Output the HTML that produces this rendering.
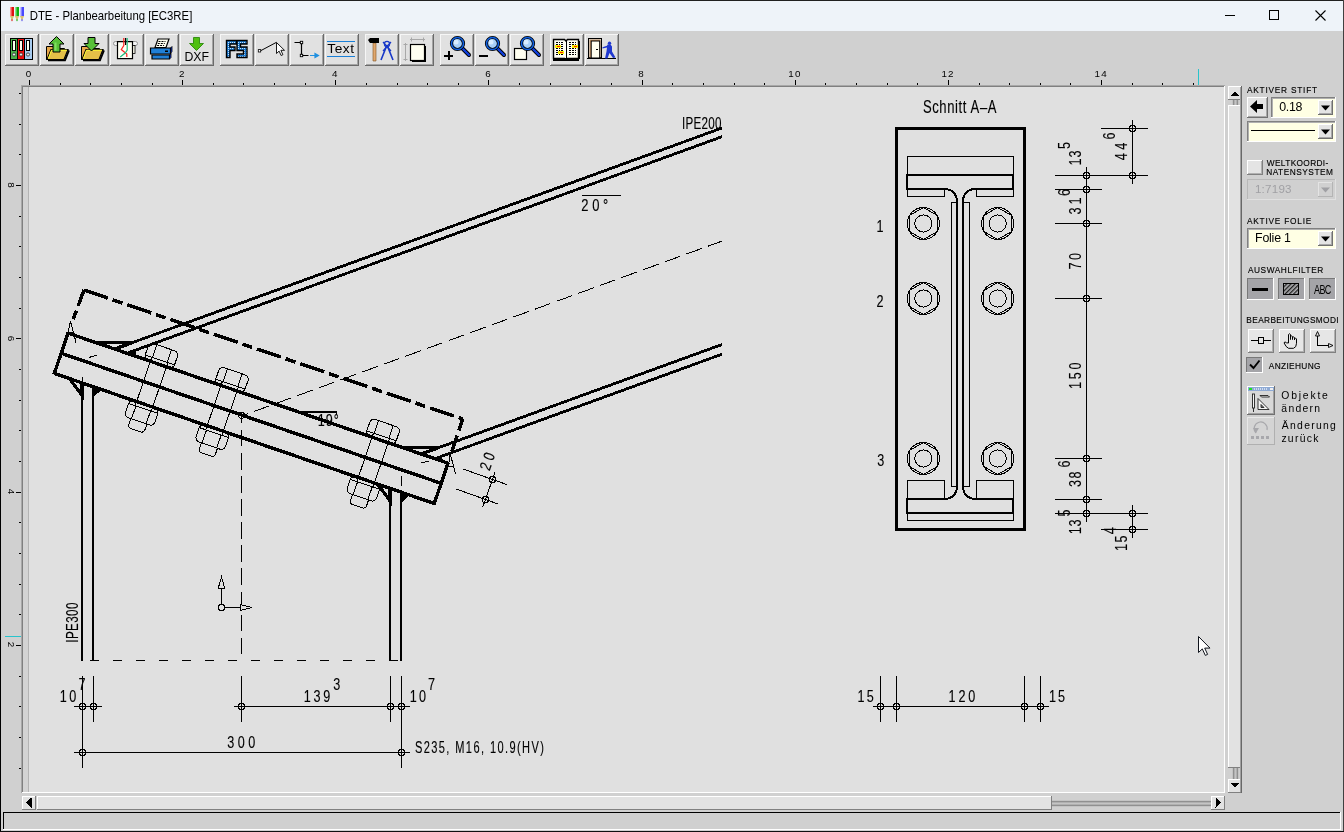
<!DOCTYPE html>
<html lang="de"><head><meta charset="utf-8"><title>DTE - Planbearbeitung [EC3RE]</title>
<style>
html,body{margin:0;padding:0;background:#d0d0d0;overflow:hidden;width:1344px;height:832px}
svg{display:block;position:absolute;left:0;top:0;will-change:transform}
text{font-family:"Liberation Sans",sans-serif;white-space:pre}
.ce{shape-rendering:crispEdges}
</style></head><body>
<svg width="1344" height="832" viewBox="0 0 1344 832">
<g class="ce">
<rect x="0" y="0" width="1344" height="832" fill="#d0d0d0"/>
<rect x="0" y="0" width="1344" height="31" fill="#eef3f9"/>
<rect x="0" y="0" width="1344" height="1" fill="#202020"/>
<rect x="0" y="0" width="1" height="832" fill="#000000"/>
<rect x="1343" y="0" width="1" height="832" fill="#404040"/>
<rect x="0" y="831" width="1344" height="1" fill="#101010"/>
</g>
<g>
<rect x="10" y="7" width="2" height="9" fill="#ff9090"/>
<rect x="11.5" y="7" width="2.5" height="9" fill="#e01010"/>
<path d="M10 16h4l-2 5z" fill="#d8c070"/>
<path d="M11 19.5h2l-1 2z" fill="#e01010"/>
<rect x="15" y="7" width="2" height="9" fill="#90e090"/>
<rect x="16.5" y="7" width="2.5" height="9" fill="#10b010"/>
<path d="M15 16h4l-2 5z" fill="#d8c070"/>
<path d="M16 19.5h2l-1 2z" fill="#10b010"/>
<rect x="20" y="7" width="2" height="9" fill="#c0c0ff"/>
<rect x="21.5" y="7" width="2.5" height="9" fill="#4848ff"/>
<path d="M20 16h4l-2 5z" fill="#d8c070"/>
<path d="M21 19.5h2l-1 2z" fill="#4848ff"/>
</g>
<text transform="translate(30.60 20.00) scale(0.940 1)" x="-0.97" y="0" font-family="'Liberation Sans', sans-serif" font-size="12.10" letter-spacing="-0.015" fill="#000">DTE - Planbearbeitung [EC3RE]</text>
<g stroke="#000" stroke-width="1" fill="none" class="ce">
<path d="M1224.5 15.5h10"/>
<rect x="1269.5" y="10.5" width="9" height="9" rx="1"/>
</g>
<path d="M1315.5 10.5l10 10M1325.5 10.5l-10 10" stroke="#000" stroke-width="1.1" fill="none"/>
<g class="ce" fill="#000">
<rect x="29" y="80" width="1" height="5" fill="#000"/>
<rect x="60" y="83" width="1" height="2" fill="#000"/>
<rect x="90" y="83" width="1" height="2" fill="#000"/>
<rect x="121" y="83" width="1" height="2" fill="#000"/>
<rect x="152" y="83" width="1" height="2" fill="#000"/>
<rect x="182" y="80" width="1" height="5" fill="#000"/>
<rect x="213" y="83" width="1" height="2" fill="#000"/>
<rect x="243" y="83" width="1" height="2" fill="#000"/>
<rect x="274" y="83" width="1" height="2" fill="#000"/>
<rect x="305" y="83" width="1" height="2" fill="#000"/>
<rect x="335" y="80" width="1" height="5" fill="#000"/>
<rect x="366" y="83" width="1" height="2" fill="#000"/>
<rect x="397" y="83" width="1" height="2" fill="#000"/>
<rect x="427" y="83" width="1" height="2" fill="#000"/>
<rect x="458" y="83" width="1" height="2" fill="#000"/>
<rect x="488" y="80" width="1" height="5" fill="#000"/>
<rect x="519" y="83" width="1" height="2" fill="#000"/>
<rect x="550" y="83" width="1" height="2" fill="#000"/>
<rect x="580" y="83" width="1" height="2" fill="#000"/>
<rect x="611" y="83" width="1" height="2" fill="#000"/>
<rect x="642" y="80" width="1" height="5" fill="#000"/>
<rect x="672" y="83" width="1" height="2" fill="#000"/>
<rect x="703" y="83" width="1" height="2" fill="#000"/>
<rect x="734" y="83" width="1" height="2" fill="#000"/>
<rect x="764" y="83" width="1" height="2" fill="#000"/>
<rect x="795" y="80" width="1" height="5" fill="#000"/>
<rect x="825" y="83" width="1" height="2" fill="#000"/>
<rect x="856" y="83" width="1" height="2" fill="#000"/>
<rect x="887" y="83" width="1" height="2" fill="#000"/>
<rect x="917" y="83" width="1" height="2" fill="#000"/>
<rect x="948" y="80" width="1" height="5" fill="#000"/>
<rect x="979" y="83" width="1" height="2" fill="#000"/>
<rect x="1009" y="83" width="1" height="2" fill="#000"/>
<rect x="1040" y="83" width="1" height="2" fill="#000"/>
<rect x="1070" y="83" width="1" height="2" fill="#000"/>
<rect x="1101" y="80" width="1" height="5" fill="#000"/>
<rect x="1132" y="83" width="1" height="2" fill="#000"/>
<rect x="1162" y="83" width="1" height="2" fill="#000"/>
<rect x="1193" y="83" width="1" height="2" fill="#000"/>
<rect x="19" y="93" width="2" height="1" fill="#000"/>
<rect x="19" y="124" width="2" height="1" fill="#000"/>
<rect x="19" y="154" width="2" height="1" fill="#000"/>
<rect x="16" y="185" width="5" height="1" fill="#000"/>
<rect x="19" y="216" width="2" height="1" fill="#000"/>
<rect x="19" y="246" width="2" height="1" fill="#000"/>
<rect x="19" y="277" width="2" height="1" fill="#000"/>
<rect x="19" y="308" width="2" height="1" fill="#000"/>
<rect x="16" y="338" width="5" height="1" fill="#000"/>
<rect x="19" y="369" width="2" height="1" fill="#000"/>
<rect x="19" y="400" width="2" height="1" fill="#000"/>
<rect x="19" y="430" width="2" height="1" fill="#000"/>
<rect x="19" y="461" width="2" height="1" fill="#000"/>
<rect x="16" y="492" width="5" height="1" fill="#000"/>
<rect x="19" y="522" width="2" height="1" fill="#000"/>
<rect x="19" y="553" width="2" height="1" fill="#000"/>
<rect x="19" y="584" width="2" height="1" fill="#000"/>
<rect x="19" y="614" width="2" height="1" fill="#000"/>
<rect x="16" y="645" width="5" height="1" fill="#000"/>
<rect x="19" y="676" width="2" height="1" fill="#000"/>
<rect x="19" y="706" width="2" height="1" fill="#000"/>
<rect x="19" y="737" width="2" height="1" fill="#000"/>
<rect x="19" y="768" width="2" height="1" fill="#000"/>
</g>
<g class="ce">
<rect x="1198" y="69" width="1" height="16" fill="#28c4cc"/>
<rect x="5" y="636" width="16" height="1" fill="#28c4cc"/>
</g>
<text x="28.5" y="76.8" font-family="'Liberation Mono', monospace" font-size="9.8" text-anchor="middle" letter-spacing="0" fill="#000">0</text>
<text x="181.7" y="76.8" font-family="'Liberation Mono', monospace" font-size="9.8" text-anchor="middle" letter-spacing="0" fill="#000">2</text>
<text x="334.8" y="76.8" font-family="'Liberation Mono', monospace" font-size="9.8" text-anchor="middle" letter-spacing="0" fill="#000">4</text>
<text x="488.0" y="76.8" font-family="'Liberation Mono', monospace" font-size="9.8" text-anchor="middle" letter-spacing="0" fill="#000">6</text>
<text x="641.1" y="76.8" font-family="'Liberation Mono', monospace" font-size="9.8" text-anchor="middle" letter-spacing="0" fill="#000">8</text>
<text x="794.9" y="76.8" font-family="'Liberation Mono', monospace" font-size="9.8" text-anchor="middle" letter-spacing="1.2" fill="#000">10</text>
<text x="948.1" y="76.8" font-family="'Liberation Mono', monospace" font-size="9.8" text-anchor="middle" letter-spacing="1.2" fill="#000">12</text>
<text x="1101.2" y="76.8" font-family="'Liberation Mono', monospace" font-size="9.8" text-anchor="middle" letter-spacing="1.2" fill="#000">14</text>
<text transform="translate(8.4 185.0) rotate(90)" font-family="'Liberation Mono', monospace" font-size="9.8" text-anchor="middle" fill="#000">8</text>
<text transform="translate(8.4 338.5) rotate(90)" font-family="'Liberation Mono', monospace" font-size="9.8" text-anchor="middle" fill="#000">6</text>
<text transform="translate(8.4 491.5) rotate(90)" font-family="'Liberation Mono', monospace" font-size="9.8" text-anchor="middle" fill="#000">4</text>
<text transform="translate(8.4 644.5) rotate(90)" font-family="'Liberation Mono', monospace" font-size="9.8" text-anchor="middle" fill="#000">2</text>
<g class="ce">
<rect x="21" y="85" width="1204" height="708" fill="#e0e0e0"/>
<rect x="21" y="85" width="1204" height="1" fill="#a8a8a8"/>
<rect x="21" y="85" width="1" height="708" fill="#a8a8a8"/>
<rect x="22" y="86" width="1203" height="1" fill="#808080"/>
<rect x="22" y="86" width="1" height="707" fill="#808080"/>
<rect x="22" y="792" width="1203" height="1" fill="#ffffff"/>
<rect x="1224" y="86" width="1" height="707" fill="#ffffff"/>
<rect x="23" y="87" width="5" height="705" fill="#d3d3d3"/>
<rect x="28" y="87" width="1" height="705" fill="#b4b4b4"/>
</g>
<g class="ce">
<rect x="1228" y="86" width="14" height="14" fill="#e2e2e2"/>
<rect x="1228" y="86" width="14" height="1" fill="#ffffff"/>
<rect x="1228" y="86" width="1" height="14" fill="#ffffff"/>
<rect x="1228" y="99" width="14" height="1" fill="#808080"/>
<rect x="1241" y="86" width="1" height="14" fill="#808080"/>
<path d="M1231 96h8l-4-5z" fill="#000"/>
<rect x="1232" y="100" width="7" height="5" fill="#c4c4c4"/>
<rect x="1233" y="100" width="1" height="5" fill="#909090"/>
<rect x="1234" y="100" width="1" height="5" fill="#b0b0b0"/>
<rect x="1236" y="100" width="1" height="5" fill="#b0b0b0"/>
<rect x="1237" y="100" width="1" height="5" fill="#909090"/>
<rect x="1228" y="105" width="14" height="663" fill="#e2e2e2"/>
<rect x="1228" y="105" width="14" height="1" fill="#ffffff"/>
<rect x="1228" y="105" width="1" height="663" fill="#ffffff"/>
<rect x="1228" y="767" width="14" height="1" fill="#808080"/>
<rect x="1241" y="105" width="1" height="663" fill="#808080"/>
<rect x="1232" y="768" width="7" height="11" fill="#c4c4c4"/>
<rect x="1233" y="768" width="1" height="11" fill="#909090"/>
<rect x="1234" y="768" width="1" height="11" fill="#b0b0b0"/>
<rect x="1236" y="768" width="1" height="11" fill="#b0b0b0"/>
<rect x="1237" y="768" width="1" height="11" fill="#909090"/>
<rect x="1228" y="779" width="14" height="14" fill="#e2e2e2"/>
<rect x="1228" y="779" width="14" height="1" fill="#ffffff"/>
<rect x="1228" y="779" width="1" height="14" fill="#ffffff"/>
<rect x="1228" y="792" width="14" height="1" fill="#808080"/>
<rect x="1241" y="779" width="1" height="14" fill="#808080"/>
<path d="M1231 783h8l-4 5z" fill="#000"/>
<rect x="22" y="796" width="14" height="14" fill="#e2e2e2"/>
<rect x="22" y="796" width="14" height="1" fill="#ffffff"/>
<rect x="22" y="796" width="1" height="14" fill="#ffffff"/>
<rect x="22" y="809" width="14" height="1" fill="#808080"/>
<rect x="35" y="796" width="1" height="14" fill="#808080"/>
<path d="M31.500 797.500v10l-5.500-5z" fill="#000"/>
<rect x="37" y="796" width="1015" height="14" fill="#e2e2e2"/>
<rect x="37" y="796" width="1015" height="1" fill="#ffffff"/>
<rect x="37" y="796" width="1" height="14" fill="#ffffff"/>
<rect x="37" y="809" width="1015" height="1" fill="#808080"/>
<rect x="1051" y="796" width="1" height="14" fill="#808080"/>
<rect x="1052" y="800" width="159" height="7" fill="#c4c4c4"/>
<rect x="1052" y="801" width="159" height="1" fill="#909090"/>
<rect x="1052" y="802" width="159" height="1" fill="#b0b0b0"/>
<rect x="1052" y="804" width="159" height="1" fill="#b0b0b0"/>
<rect x="1052" y="805" width="159" height="1" fill="#909090"/>
<rect x="1211" y="796" width="14" height="14" fill="#e2e2e2"/>
<rect x="1211" y="796" width="14" height="1" fill="#ffffff"/>
<rect x="1211" y="796" width="1" height="14" fill="#ffffff"/>
<rect x="1211" y="809" width="14" height="1" fill="#808080"/>
<rect x="1224" y="796" width="1" height="14" fill="#808080"/>
<path d="M1215.500 797.500v10l5.500-5z" fill="#000"/>
<rect x="3" y="812" width="1338" height="1" fill="#000"/>
<rect x="3" y="812" width="1" height="18" fill="#000"/>
<rect x="3" y="829" width="1338" height="1" fill="#fff"/>
<rect x="1340" y="812" width="1" height="18" fill="#fff"/>
</g>
<g class="ce">
<rect x="5" y="34" width="34" height="32" fill="#e1e1e1"/>
<rect x="5" y="34" width="34" height="1" fill="#f6f6f6"/>
<rect x="5" y="34" width="1" height="32" fill="#f6f6f6"/>
<rect x="6" y="64" width="32" height="1" fill="#a4a4a4"/>
<rect x="37" y="35" width="1" height="30" fill="#a4a4a4"/>
<rect x="5" y="65" width="34" height="1" fill="#6a6a6a"/>
<rect x="38" y="34" width="1" height="32" fill="#6a6a6a"/>
<rect x="40" y="34" width="34" height="32" fill="#e1e1e1"/>
<rect x="40" y="34" width="34" height="1" fill="#f6f6f6"/>
<rect x="40" y="34" width="1" height="32" fill="#f6f6f6"/>
<rect x="41" y="64" width="32" height="1" fill="#a4a4a4"/>
<rect x="72" y="35" width="1" height="30" fill="#a4a4a4"/>
<rect x="40" y="65" width="34" height="1" fill="#6a6a6a"/>
<rect x="73" y="34" width="1" height="32" fill="#6a6a6a"/>
<rect x="75" y="34" width="34" height="32" fill="#e1e1e1"/>
<rect x="75" y="34" width="34" height="1" fill="#f6f6f6"/>
<rect x="75" y="34" width="1" height="32" fill="#f6f6f6"/>
<rect x="76" y="64" width="32" height="1" fill="#a4a4a4"/>
<rect x="107" y="35" width="1" height="30" fill="#a4a4a4"/>
<rect x="75" y="65" width="34" height="1" fill="#6a6a6a"/>
<rect x="108" y="34" width="1" height="32" fill="#6a6a6a"/>
<rect x="110" y="34" width="34" height="32" fill="#e1e1e1"/>
<rect x="110" y="34" width="34" height="1" fill="#f6f6f6"/>
<rect x="110" y="34" width="1" height="32" fill="#f6f6f6"/>
<rect x="111" y="64" width="32" height="1" fill="#a4a4a4"/>
<rect x="142" y="35" width="1" height="30" fill="#a4a4a4"/>
<rect x="110" y="65" width="34" height="1" fill="#6a6a6a"/>
<rect x="143" y="34" width="1" height="32" fill="#6a6a6a"/>
<rect x="145" y="34" width="34" height="32" fill="#e1e1e1"/>
<rect x="145" y="34" width="34" height="1" fill="#f6f6f6"/>
<rect x="145" y="34" width="1" height="32" fill="#f6f6f6"/>
<rect x="146" y="64" width="32" height="1" fill="#a4a4a4"/>
<rect x="177" y="35" width="1" height="30" fill="#a4a4a4"/>
<rect x="145" y="65" width="34" height="1" fill="#6a6a6a"/>
<rect x="178" y="34" width="1" height="32" fill="#6a6a6a"/>
<rect x="180" y="34" width="34" height="32" fill="#e1e1e1"/>
<rect x="180" y="34" width="34" height="1" fill="#f6f6f6"/>
<rect x="180" y="34" width="1" height="32" fill="#f6f6f6"/>
<rect x="181" y="64" width="32" height="1" fill="#a4a4a4"/>
<rect x="212" y="35" width="1" height="30" fill="#a4a4a4"/>
<rect x="180" y="65" width="34" height="1" fill="#6a6a6a"/>
<rect x="213" y="34" width="1" height="32" fill="#6a6a6a"/>
<rect x="220" y="34" width="34" height="32" fill="#e1e1e1"/>
<rect x="220" y="34" width="34" height="1" fill="#f6f6f6"/>
<rect x="220" y="34" width="1" height="32" fill="#f6f6f6"/>
<rect x="221" y="64" width="32" height="1" fill="#a4a4a4"/>
<rect x="252" y="35" width="1" height="30" fill="#a4a4a4"/>
<rect x="220" y="65" width="34" height="1" fill="#6a6a6a"/>
<rect x="253" y="34" width="1" height="32" fill="#6a6a6a"/>
<rect x="255" y="34" width="34" height="32" fill="#e1e1e1"/>
<rect x="255" y="34" width="34" height="1" fill="#f6f6f6"/>
<rect x="255" y="34" width="1" height="32" fill="#f6f6f6"/>
<rect x="256" y="64" width="32" height="1" fill="#a4a4a4"/>
<rect x="287" y="35" width="1" height="30" fill="#a4a4a4"/>
<rect x="255" y="65" width="34" height="1" fill="#6a6a6a"/>
<rect x="288" y="34" width="1" height="32" fill="#6a6a6a"/>
<rect x="290" y="34" width="34" height="32" fill="#e1e1e1"/>
<rect x="290" y="34" width="34" height="1" fill="#f6f6f6"/>
<rect x="290" y="34" width="1" height="32" fill="#f6f6f6"/>
<rect x="291" y="64" width="32" height="1" fill="#a4a4a4"/>
<rect x="322" y="35" width="1" height="30" fill="#a4a4a4"/>
<rect x="290" y="65" width="34" height="1" fill="#6a6a6a"/>
<rect x="323" y="34" width="1" height="32" fill="#6a6a6a"/>
<rect x="325" y="34" width="34" height="32" fill="#e1e1e1"/>
<rect x="325" y="34" width="34" height="1" fill="#f6f6f6"/>
<rect x="325" y="34" width="1" height="32" fill="#f6f6f6"/>
<rect x="326" y="64" width="32" height="1" fill="#a4a4a4"/>
<rect x="357" y="35" width="1" height="30" fill="#a4a4a4"/>
<rect x="325" y="65" width="34" height="1" fill="#6a6a6a"/>
<rect x="358" y="34" width="1" height="32" fill="#6a6a6a"/>
<rect x="365" y="34" width="34" height="32" fill="#e1e1e1"/>
<rect x="365" y="34" width="34" height="1" fill="#f6f6f6"/>
<rect x="365" y="34" width="1" height="32" fill="#f6f6f6"/>
<rect x="366" y="64" width="32" height="1" fill="#a4a4a4"/>
<rect x="397" y="35" width="1" height="30" fill="#a4a4a4"/>
<rect x="365" y="65" width="34" height="1" fill="#6a6a6a"/>
<rect x="398" y="34" width="1" height="32" fill="#6a6a6a"/>
<rect x="400" y="34" width="34" height="32" fill="#e1e1e1"/>
<rect x="400" y="34" width="34" height="1" fill="#f6f6f6"/>
<rect x="400" y="34" width="1" height="32" fill="#f6f6f6"/>
<rect x="401" y="64" width="32" height="1" fill="#a4a4a4"/>
<rect x="432" y="35" width="1" height="30" fill="#a4a4a4"/>
<rect x="400" y="65" width="34" height="1" fill="#6a6a6a"/>
<rect x="433" y="34" width="1" height="32" fill="#6a6a6a"/>
<rect x="440" y="34" width="34" height="32" fill="#e1e1e1"/>
<rect x="440" y="34" width="34" height="1" fill="#f6f6f6"/>
<rect x="440" y="34" width="1" height="32" fill="#f6f6f6"/>
<rect x="441" y="64" width="32" height="1" fill="#a4a4a4"/>
<rect x="472" y="35" width="1" height="30" fill="#a4a4a4"/>
<rect x="440" y="65" width="34" height="1" fill="#6a6a6a"/>
<rect x="473" y="34" width="1" height="32" fill="#6a6a6a"/>
<rect x="475" y="34" width="34" height="32" fill="#e1e1e1"/>
<rect x="475" y="34" width="34" height="1" fill="#f6f6f6"/>
<rect x="475" y="34" width="1" height="32" fill="#f6f6f6"/>
<rect x="476" y="64" width="32" height="1" fill="#a4a4a4"/>
<rect x="507" y="35" width="1" height="30" fill="#a4a4a4"/>
<rect x="475" y="65" width="34" height="1" fill="#6a6a6a"/>
<rect x="508" y="34" width="1" height="32" fill="#6a6a6a"/>
<rect x="510" y="34" width="34" height="32" fill="#e1e1e1"/>
<rect x="510" y="34" width="34" height="1" fill="#f6f6f6"/>
<rect x="510" y="34" width="1" height="32" fill="#f6f6f6"/>
<rect x="511" y="64" width="32" height="1" fill="#a4a4a4"/>
<rect x="542" y="35" width="1" height="30" fill="#a4a4a4"/>
<rect x="510" y="65" width="34" height="1" fill="#6a6a6a"/>
<rect x="543" y="34" width="1" height="32" fill="#6a6a6a"/>
<rect x="550" y="34" width="34" height="32" fill="#e1e1e1"/>
<rect x="550" y="34" width="34" height="1" fill="#f6f6f6"/>
<rect x="550" y="34" width="1" height="32" fill="#f6f6f6"/>
<rect x="551" y="64" width="32" height="1" fill="#a4a4a4"/>
<rect x="582" y="35" width="1" height="30" fill="#a4a4a4"/>
<rect x="550" y="65" width="34" height="1" fill="#6a6a6a"/>
<rect x="583" y="34" width="1" height="32" fill="#6a6a6a"/>
<rect x="585" y="34" width="34" height="32" fill="#e1e1e1"/>
<rect x="585" y="34" width="34" height="1" fill="#f6f6f6"/>
<rect x="585" y="34" width="1" height="32" fill="#f6f6f6"/>
<rect x="586" y="64" width="32" height="1" fill="#a4a4a4"/>
<rect x="617" y="35" width="1" height="30" fill="#a4a4a4"/>
<rect x="585" y="65" width="34" height="1" fill="#6a6a6a"/>
<rect x="618" y="34" width="1" height="32" fill="#6a6a6a"/>
</g>
<g class="ce">
<rect x="10" y="38" width="23" height="22" fill="#000"/>
<rect x="11" y="39" width="6" height="20" fill="#48b048"/>
<rect x="12" y="40" width="4" height="11" fill="#000"/>
<rect x="13" y="41" width="2" height="9" fill="#fffff0"/>
<rect x="18" y="39" width="6" height="20" fill="#f01010"/>
<rect x="19" y="40" width="4" height="11" fill="#000"/>
<rect x="20" y="41" width="2" height="9" fill="#fffff0"/>
<rect x="25" y="39" width="7" height="20" fill="#a8ccf0"/>
<rect x="26" y="40" width="4" height="11" fill="#000"/>
<rect x="27" y="41" width="2" height="9" fill="#fffff0"/>
</g>
<circle cx="14" cy="54.5" r="1.6" fill="#e8e8e8" stroke="#303030" stroke-width="0.8"/>
<circle cx="21" cy="54.5" r="1.6" fill="#e8e8e8" stroke="#303030" stroke-width="0.8"/>
<circle cx="28" cy="54.5" r="1.6" fill="#e8e8e8" stroke="#303030" stroke-width="0.8"/>
<path d="M46.5 46.5v13h2l3-9h13v-2h-9l-1-2z" fill="#e8a848" stroke="#000" stroke-width="1" stroke-linejoin="miter"/>
<path d="M47 59.5l4-10h17l-4 10z" fill="#e4c048" stroke="#000" stroke-width="1.2"/>
<path d="M48.3 58.6l3.2-8.4h15.5" fill="none" stroke="#ffff30" stroke-width="1"/>
<path d="M48 60.3h17l4-10" fill="none" stroke="#000" stroke-width="1.8"/>
<path d="M56.5 36.5l7.5 7.5h-4v8h-7v-8h-4z" fill="#58c038" stroke="#000" stroke-width="1" stroke-linejoin="miter"/>
<path d="M55.5 50.5v-8" stroke="#80e060" stroke-width="2"/>
<path d="M81.5 46.5v13h2l3-9h13v-2h-9l-1-2z" fill="#e8a848" stroke="#000" stroke-width="1" stroke-linejoin="miter"/>
<path d="M82 59.5l4-10h17l-4 10z" fill="#e4c048" stroke="#000" stroke-width="1.2"/>
<path d="M83.3 58.6l3.2-8.4h15.5" fill="none" stroke="#ffff30" stroke-width="1"/>
<path d="M83 60.3h17l4-10" fill="none" stroke="#000" stroke-width="1.8"/>
<path d="M88 37.5h7v6h4l-7.5 7.5l-7.5-7.5h4z" fill="#58c038" stroke="#000" stroke-width="1" stroke-linejoin="miter"/>
<g>
<rect x="113.5" y="41.5" width="24" height="4" rx="2" fill="#f4f4f4" stroke="#808080" stroke-width="0.8"/>
<rect x="132.5" y="45.5" width="2.5" height="8" fill="#fffff0" stroke="#000" stroke-width="0.8"/>
<path d="M117.5 41.7h15v17h-15z" fill="#fffff4" stroke="#000" stroke-width="1.2"/>
<path d="M123.8 38v7.500l-2.500 4l5.500 4.500v3" fill="none" stroke="#ff2020" stroke-width="1.2"/>
<path d="M127.2 38v12l-2 3l-5 4" fill="none" stroke="#20c080" stroke-width="1.2"/>
<rect x="125" y="38" width="1.2" height="7" fill="#000"/>
</g>
<path d="M155 47.5l3-8.500h11l-3 8.500z" fill="#fffff0" stroke="#000" stroke-width="1.2"/>
<path d="M158.5 41.5h7M157.8 43.5h7M157.1 45.5h7" stroke="#000" stroke-width="1" stroke-dasharray="2 1" fill="none"/>
<path d="M150.5 48h20v6h-20z" fill="#2080d8" stroke="#000" stroke-width="1.2"/>
<path d="M152 55h17.500v4h-17.500z" fill="#2080d8" stroke="#000" stroke-width="1.2"/>
<path d="M170.5 48l1.500-1.500v5l-1.500 2zM169.5 55l1.500-1.500v4l-1.500 1.500z" fill="#1030c0" stroke="#000" stroke-width="0.8"/>
<rect x="165" y="50.5" width="3" height="1.5" fill="#000"/>
<path d="M193.5 37.5h6v6h4l-7 7l-7-7h4z" fill="#50c010" stroke="#208000" stroke-width="0.8"/>
<text transform="translate(185.50 60.80)" x="-0.98" y="0" font-family="'Liberation Sans', sans-serif" font-size="12.30" letter-spacing="-0.077" fill="#000">DXF</text>
<defs><pattern id="dots" width="2" height="2" patternUnits="userSpaceOnUse"><rect width="2" height="2" fill="#1878d0"/><rect width="1" height="1" fill="#c8e4ff"/></pattern></defs>
<path d="M226.5 40.5h10v3.500h-6.500v3h5v3.500h-5v7h-3.500zM237 40.5h10v3.500h-6.500v3h6.500v10.500h-10v-3.500h6.500v-3.500h-6.500z" fill="url(#dots)" stroke="#000" stroke-width="1.4"/>
<path d="M260.5 50.8l16-8.500" stroke="#000" stroke-width="1" fill="none"/>
<rect x="258.3" y="49.6" width="2.4" height="2.4" fill="#fff" stroke="#000" stroke-width="0.8"/>
<path d="M276.5 42.5v11l2.600-2.400l2 4.400l1.800-.8l-2-4.400h3.600z" fill="#fff" stroke="#000" stroke-width="0.9"/>
<path d="M294.5 42.5h7v13h7" stroke="#000" stroke-width="1.2" fill="none"/>
<rect x="300.3" y="41.3" width="2.4" height="2.4" fill="#fff" stroke="#000" stroke-width="0.9"/><rect x="300.3" y="54.3" width="2.4" height="2.4" fill="#fff" stroke="#000" stroke-width="0.9"/>
<path d="M310 55.5h8M315 53.5l3.500 2l-3.500 2z" stroke="#2090e0" stroke-width="1.2" fill="#2090e0"/>
<g class="ce">
<rect x="327" y="41" width="28" height="1" fill="#1a80d8"/>
<rect x="327" y="56" width="28" height="1" fill="#1a80d8"/>
</g>
<text transform="translate(327.50 53.30)" x="-0.27" y="0" font-family="'Liberation Sans', sans-serif" font-size="13.70" letter-spacing="0.579" fill="#000">Text</text>
<path d="M373 43h3v18h-3z" fill="#e0a870" stroke="#805020" stroke-width="0.6"/>
<path d="M368 40l2-2h9v5h-9z" fill="#000"/>
<path d="M387 45l-6 15M387 45l6 15" stroke="#1838c8" stroke-width="1.6" fill="none"/>
<path d="M383 42l8 9M391 42l-8 9" stroke="#1838c8" stroke-width="1.2" fill="none"/>
<circle cx="387" cy="44" r="2.6" fill="none" stroke="#1838c8" stroke-width="1.2"/>
<g stroke="#a8a8a8" stroke-width="1" fill="none"><path d="M410 39.5h15M411.5 37.5v4M423.5 37.5v4M405.5 43v18M403.5 44.5h4M403.5 59.5h4"/></g>
<rect x="410.5" y="44.5" width="14" height="16" fill="#fffff0" stroke="#000" stroke-width="1.2"/>
<rect x="424.5" y="46" width="1.5" height="16" fill="#000"/>
<rect x="412" y="60.5" width="13" height="1.5" fill="#000"/>
<path d="M462.5 48.5l6.5 6.5" stroke="#000" stroke-width="4" stroke-linecap="round"/>
<path d="M462.5 48.5l6.5 6.5" stroke="#1040e0" stroke-width="2.2" stroke-linecap="round"/>
<circle cx="457.5" cy="43.5" r="6" fill="#a8d0f8" stroke="#000" stroke-width="3.2"/>
<circle cx="457.5" cy="43.5" r="6" fill="none" stroke="#1060e0" stroke-width="1.6"/>
<circle cx="456" cy="42" r="2.5" fill="#d8ecff"/>
<g class="ce">
<rect x="444" y="54.5" width="9" height="2" fill="#000"/>
<rect x="447.5" y="51" width="2" height="9" fill="#000"/>
</g>
<path d="M497.5 48.5l6.5 6.5" stroke="#000" stroke-width="4" stroke-linecap="round"/>
<path d="M497.5 48.5l6.5 6.5" stroke="#1040e0" stroke-width="2.2" stroke-linecap="round"/>
<circle cx="492.5" cy="43.5" r="6" fill="#a8d0f8" stroke="#000" stroke-width="3.2"/>
<circle cx="492.5" cy="43.5" r="6" fill="none" stroke="#1060e0" stroke-width="1.6"/>
<circle cx="491" cy="42" r="2.5" fill="#d8ecff"/>
<g class="ce">
<rect x="479" y="55" width="9" height="2" fill="#000"/>
</g>
<rect x="514.5" y="48.5" width="12" height="11" fill="#fffff0" stroke="#000" stroke-width="1.2"/>
<path d="M532.5 48.5l6.5 6.5" stroke="#000" stroke-width="4" stroke-linecap="round"/>
<path d="M532.5 48.5l6.5 6.5" stroke="#1040e0" stroke-width="2.2" stroke-linecap="round"/>
<circle cx="527.5" cy="43.5" r="6" fill="#a8d0f8" stroke="#000" stroke-width="3.2"/>
<circle cx="527.5" cy="43.5" r="6" fill="none" stroke="#1060e0" stroke-width="1.6"/>
<circle cx="526" cy="42" r="2.5" fill="#d8ecff"/>
<path d="M553.5 39.5h11l1.500 1.500l1.500-1.500h11v19h-11l-1.500 1.500l-1.500-1.500h-11z" fill="#fffff4" stroke="#000" stroke-width="1.4"/>
<g class="ce">
<rect x="553" y="58" width="26" height="2.5" fill="#000"/>
<rect x="578" y="41" width="1.5" height="18" fill="#000"/>
<rect x="566" y="41" width="1" height="19" fill="#000"/>
<rect x="556" y="42" width="2" height="1" fill="#000"/>
<rect x="559" y="42" width="1" height="1" fill="#000"/>
<rect x="561" y="42" width="2" height="1" fill="#000"/>
<rect x="569" y="42" width="2" height="1" fill="#000"/>
<rect x="572" y="42" width="2" height="1" fill="#000"/>
<rect x="575" y="42" width="1" height="1" fill="#000"/>
<rect x="556" y="44" width="2" height="1" fill="#000"/>
<rect x="559" y="44" width="1" height="1" fill="#000"/>
<rect x="561" y="44" width="2" height="1" fill="#000"/>
<rect x="569" y="44" width="2" height="1" fill="#000"/>
<rect x="572" y="44" width="2" height="1" fill="#000"/>
<rect x="575" y="44" width="1" height="1" fill="#000"/>
<rect x="556" y="46" width="2" height="1" fill="#000"/>
<rect x="559" y="46" width="1" height="1" fill="#000"/>
<rect x="561" y="46" width="2" height="1" fill="#000"/>
<rect x="569" y="46" width="2" height="1" fill="#000"/>
<rect x="572" y="46" width="2" height="1" fill="#000"/>
<rect x="575" y="46" width="1" height="1" fill="#000"/>
<rect x="556" y="48" width="2" height="1" fill="#000"/>
<rect x="559" y="48" width="1" height="1" fill="#000"/>
<rect x="561" y="48" width="2" height="1" fill="#000"/>
<rect x="569" y="48" width="2" height="1" fill="#000"/>
<rect x="572" y="48" width="2" height="1" fill="#000"/>
<rect x="575" y="48" width="1" height="1" fill="#000"/>
<rect x="556" y="50" width="2" height="1" fill="#000"/>
<rect x="559" y="50" width="1" height="1" fill="#000"/>
<rect x="561" y="50" width="2" height="1" fill="#000"/>
<rect x="569" y="50" width="2" height="1" fill="#000"/>
<rect x="572" y="50" width="2" height="1" fill="#000"/>
<rect x="575" y="50" width="1" height="1" fill="#000"/>
<rect x="556" y="52" width="2" height="1" fill="#000"/>
<rect x="559" y="52" width="1" height="1" fill="#000"/>
<rect x="561" y="52" width="2" height="1" fill="#000"/>
<rect x="569" y="52" width="2" height="1" fill="#000"/>
<rect x="572" y="52" width="2" height="1" fill="#000"/>
<rect x="575" y="52" width="1" height="1" fill="#000"/>
<rect x="556" y="54" width="2" height="1" fill="#000"/>
<rect x="559" y="54" width="1" height="1" fill="#000"/>
<rect x="561" y="54" width="2" height="1" fill="#000"/>
<rect x="569" y="54" width="2" height="1" fill="#000"/>
<rect x="572" y="54" width="2" height="1" fill="#000"/>
<rect x="575" y="54" width="1" height="1" fill="#000"/>
<rect x="555" y="45" width="6" height="3" fill="#fff000"/>
<rect x="556.5" y="46" width="3" height="1" fill="#ff2000"/>
<rect x="572" y="45" width="6" height="3" fill="#fff000"/>
<rect x="573.5" y="46" width="3" height="1" fill="#ff2000"/>
<rect x="558" y="51" width="6" height="3" fill="#fff000"/>
<rect x="559.5" y="52" width="3" height="1" fill="#ff2000"/>
</g>
<rect x="588.5" y="38.5" width="13" height="19" fill="none" stroke="#000" stroke-width="1"/>
<rect x="589.5" y="39.5" width="11" height="18" fill="#c09060"/>
<rect x="591.2" y="41" width="8.500" height="17" fill="#fffff0" stroke="#000" stroke-width="1"/>
<g class="ce">
<rect x="596" y="48.5" width="2" height="1" fill="#000"/>
<rect x="587" y="57.5" width="29" height="1" fill="#000"/>
</g>
<path d="M607.5 44.5l3 0l1.500 2l0 5l3.500 6l-2.500 .5l-3.500-5l-2 5.500l-2.500 0l1.500-7l.5-4l-4.500 1l0-1.200l4.500-1.500z" fill="#2038d0"/>
<circle cx="609.5" cy="43.3" r="1.700" fill="#2038d0"/>
<text transform="translate(1247.00 93.00) scale(0.840 1)" x="-0.00" y="0" font-family="'Liberation Sans', sans-serif" font-size="9.90" letter-spacing="0.912" fill="#000" stroke="#000" stroke-width="0.15">AKTIVER STIFT</text>
<g class="ce">
<rect x="1247" y="97" width="21" height="21" fill="#e4e4e4"/>
<rect x="1247" y="97" width="21" height="1" fill="#ffffff"/>
<rect x="1247" y="97" width="1" height="21" fill="#ffffff"/>
<rect x="1248" y="116" width="19" height="1" fill="#a8a8a8"/>
<rect x="1266" y="98" width="1" height="19" fill="#a8a8a8"/>
<rect x="1247" y="117" width="21" height="1" fill="#707070"/>
<rect x="1267" y="97" width="1" height="21" fill="#707070"/>
<rect x="1271" y="97" width="65" height="21" fill="#ffffe4"/>
<rect x="1271" y="97" width="65" height="1" fill="#808080"/>
<rect x="1271" y="97" width="1" height="21" fill="#808080"/>
<rect x="1271" y="117" width="65" height="1" fill="#ffffff"/>
<rect x="1335" y="97" width="1" height="21" fill="#ffffff"/>
<rect x="1272" y="98" width="63" height="1" fill="#b0b0b0"/>
<rect x="1272" y="98" width="1" height="19" fill="#b0b0b0"/>
<rect x="1247" y="121" width="89" height="21" fill="#ffffe4"/>
<rect x="1247" y="121" width="89" height="1" fill="#808080"/>
<rect x="1247" y="121" width="1" height="21" fill="#808080"/>
<rect x="1247" y="141" width="89" height="1" fill="#ffffff"/>
<rect x="1335" y="121" width="1" height="21" fill="#ffffff"/>
<rect x="1248" y="122" width="87" height="1" fill="#b0b0b0"/>
<rect x="1248" y="122" width="1" height="19" fill="#b0b0b0"/>
<rect x="1251" y="130" width="64" height="1" fill="#000"/>
</g>
<path d="M1250 106.500l7-6.500v4h6v5h-6v4z" fill="#000"/>
<g class="ce">
<rect x="1318" y="100" width="15" height="15" fill="#e4e4e4"/>
<rect x="1318" y="100" width="15" height="1" fill="#ffffff"/>
<rect x="1318" y="100" width="1" height="15" fill="#ffffff"/>
<rect x="1319" y="113" width="13" height="1" fill="#a8a8a8"/>
<rect x="1331" y="101" width="1" height="13" fill="#a8a8a8"/>
<rect x="1318" y="114" width="15" height="1" fill="#707070"/>
<rect x="1332" y="100" width="1" height="15" fill="#707070"/>
</g>
<path d="M1321 105.5h9l-4.500 5z" fill="#000"/>
<g class="ce">
<rect x="1318" y="124" width="15" height="15" fill="#e4e4e4"/>
<rect x="1318" y="124" width="15" height="1" fill="#ffffff"/>
<rect x="1318" y="124" width="1" height="15" fill="#ffffff"/>
<rect x="1319" y="137" width="13" height="1" fill="#a8a8a8"/>
<rect x="1331" y="125" width="1" height="13" fill="#a8a8a8"/>
<rect x="1318" y="138" width="15" height="1" fill="#707070"/>
<rect x="1332" y="124" width="1" height="15" fill="#707070"/>
</g>
<path d="M1321 129.5h9l-4.500 5z" fill="#000"/>
<text transform="translate(1279.80 111.00)" x="-0.46" y="0" font-family="'Liberation Sans', sans-serif" font-size="12.40" letter-spacing="-0.386" fill="#000">0.18</text>
<g class="ce">
<rect x="1247" y="160" width="16" height="15" fill="#e4e4e4"/>
<rect x="1247" y="160" width="16" height="1" fill="#ffffff"/>
<rect x="1247" y="160" width="1" height="15" fill="#ffffff"/>
<rect x="1248" y="173" width="14" height="1" fill="#b0b0b0"/>
<rect x="1261" y="161" width="1" height="13" fill="#b0b0b0"/>
<rect x="1247" y="174" width="16" height="1" fill="#808080"/>
<rect x="1262" y="160" width="1" height="15" fill="#808080"/>
</g>
<text transform="translate(1266.80 166.00) scale(0.840 1)" x="-0.02" y="0" font-family="'Liberation Sans', sans-serif" font-size="9.90" letter-spacing="0.420" fill="#000" stroke="#000" stroke-width="0.15">WELTKOORDI-</text>
<text transform="translate(1266.80 175.00) scale(0.840 1)" x="-0.79" y="0" font-family="'Liberation Sans', sans-serif" font-size="9.90" letter-spacing="0.615" fill="#000" stroke="#000" stroke-width="0.15">NATENSYSTEM</text>
<g class="ce">
<rect x="1247" y="179" width="89" height="1" fill="#b8b8b8"/>
<rect x="1247" y="179" width="1" height="21" fill="#b8b8b8"/>
<rect x="1247" y="199" width="89" height="1" fill="#e0e0e0"/>
<rect x="1335" y="179" width="1" height="21" fill="#e0e0e0"/>
</g>
<g class="ce">
<rect x="1318" y="182" width="15" height="15" fill="#d0d0d0"/>
<rect x="1318" y="182" width="15" height="1" fill="#e4e4e4"/>
<rect x="1318" y="182" width="1" height="15" fill="#e4e4e4"/>
<rect x="1318" y="196" width="15" height="1" fill="#b4b4b4"/>
<rect x="1332" y="182" width="1" height="15" fill="#b4b4b4"/>
</g>
<path d="M1321 187.5h9l-4.500 5z" fill="#a0a0a4"/>
<text transform="translate(1255.80 192.60)" x="-0.87" y="0" font-family="'Liberation Sans', sans-serif" font-size="11.60" letter-spacing="0.219" fill="#a0a0a4">1:7193</text>
<text transform="translate(1247.00 224.00) scale(0.840 1)" x="-0.00" y="0" font-family="'Liberation Sans', sans-serif" font-size="9.90" letter-spacing="0.912" fill="#000" stroke="#000" stroke-width="0.15">AKTIVE FOLIE</text>
<g class="ce">
<rect x="1247" y="228" width="89" height="21" fill="#ffffe4"/>
<rect x="1247" y="228" width="89" height="1" fill="#808080"/>
<rect x="1247" y="228" width="1" height="21" fill="#808080"/>
<rect x="1247" y="248" width="89" height="1" fill="#ffffff"/>
<rect x="1335" y="228" width="1" height="21" fill="#ffffff"/>
<rect x="1248" y="229" width="87" height="1" fill="#b0b0b0"/>
<rect x="1248" y="229" width="1" height="19" fill="#b0b0b0"/>
</g>
<g class="ce">
<rect x="1318" y="231" width="15" height="15" fill="#e4e4e4"/>
<rect x="1318" y="231" width="15" height="1" fill="#ffffff"/>
<rect x="1318" y="231" width="1" height="15" fill="#ffffff"/>
<rect x="1319" y="244" width="13" height="1" fill="#a8a8a8"/>
<rect x="1331" y="232" width="1" height="13" fill="#a8a8a8"/>
<rect x="1318" y="245" width="15" height="1" fill="#707070"/>
<rect x="1332" y="231" width="1" height="15" fill="#707070"/>
</g>
<path d="M1321 236.5h9l-4.500 5z" fill="#000"/>
<text transform="translate(1256.00 242.00)" x="-0.99" y="0" font-family="'Liberation Sans', sans-serif" font-size="12.40" letter-spacing="-0.203" fill="#000">Folie 1</text>
<text transform="translate(1248.00 273.00) scale(0.840 1)" x="-0.00" y="0" font-family="'Liberation Sans', sans-serif" font-size="9.90" letter-spacing="0.647" fill="#000" stroke="#000" stroke-width="0.15">AUSWAHLFILTER</text>
<g class="ce">
<rect x="1247" y="278" width="27" height="22" fill="#a4a4a8"/>
<rect x="1247" y="278" width="27" height="1" fill="#787878"/>
<rect x="1247" y="278" width="1" height="22" fill="#787878"/>
<rect x="1247" y="299" width="27" height="1" fill="#ffffff"/>
<rect x="1273" y="278" width="1" height="22" fill="#ffffff"/>
<rect x="1278" y="278" width="27" height="22" fill="#a4a4a8"/>
<rect x="1278" y="278" width="27" height="1" fill="#787878"/>
<rect x="1278" y="278" width="1" height="22" fill="#787878"/>
<rect x="1278" y="299" width="27" height="1" fill="#ffffff"/>
<rect x="1304" y="278" width="1" height="22" fill="#ffffff"/>
<rect x="1309" y="278" width="27" height="22" fill="#a4a4a8"/>
<rect x="1309" y="278" width="27" height="1" fill="#787878"/>
<rect x="1309" y="278" width="1" height="22" fill="#787878"/>
<rect x="1309" y="299" width="27" height="1" fill="#ffffff"/>
<rect x="1335" y="278" width="1" height="22" fill="#ffffff"/>
<rect x="1252" y="288" width="16" height="3" fill="#000"/>
</g>
<defs><pattern id="hat" width="3" height="3" patternUnits="userSpaceOnUse" patternTransform="rotate(-45)"><rect width="3" height="3" fill="#b0b0b4"/><rect width="3" height="1.3" fill="#202020"/></pattern></defs>
<rect x="1283.500" y="283.500" width="15" height="11" fill="url(#hat)" stroke="#000" stroke-width="1" class="ce"/>
<text transform="translate(1314.00 293.80) scale(0.720 1)" x="-0.00" y="0" font-family="'Liberation Sans', sans-serif" font-size="12.60" letter-spacing="-0.920" fill="#000">ABC</text>
<text transform="translate(1247.00 323.40) scale(0.840 1)" x="-0.79" y="0" font-family="'Liberation Sans', sans-serif" font-size="9.90" letter-spacing="0.441" fill="#000" stroke="#000" stroke-width="0.15">BEARBEITUNGSMODI</text>
<g class="ce">
<rect x="1248" y="329" width="26" height="24" fill="#e6e6e6"/>
<rect x="1248" y="329" width="26" height="1" fill="#ffffff"/>
<rect x="1248" y="329" width="1" height="24" fill="#ffffff"/>
<rect x="1249" y="351" width="24" height="1" fill="#b0b0b0"/>
<rect x="1272" y="330" width="1" height="22" fill="#b0b0b0"/>
<rect x="1248" y="352" width="26" height="1" fill="#808080"/>
<rect x="1273" y="329" width="1" height="24" fill="#808080"/>
<rect x="1279" y="329" width="26" height="24" fill="#e6e6e6"/>
<rect x="1279" y="329" width="26" height="1" fill="#ffffff"/>
<rect x="1279" y="329" width="1" height="24" fill="#ffffff"/>
<rect x="1280" y="351" width="24" height="1" fill="#b0b0b0"/>
<rect x="1303" y="330" width="1" height="22" fill="#b0b0b0"/>
<rect x="1279" y="352" width="26" height="1" fill="#808080"/>
<rect x="1304" y="329" width="1" height="24" fill="#808080"/>
<rect x="1310" y="329" width="26" height="24" fill="#e6e6e6"/>
<rect x="1310" y="329" width="26" height="1" fill="#ffffff"/>
<rect x="1310" y="329" width="1" height="24" fill="#ffffff"/>
<rect x="1311" y="351" width="24" height="1" fill="#b0b0b0"/>
<rect x="1334" y="330" width="1" height="22" fill="#b0b0b0"/>
<rect x="1310" y="352" width="26" height="1" fill="#808080"/>
<rect x="1335" y="329" width="1" height="24" fill="#808080"/>
</g>
<g class="ce" stroke="#000" stroke-width="1" fill="none"><path d="M1251 340.500h7M1264 340.500h7"/><rect x="1258.500" y="337.500" width="5" height="6"/></g>
<path d="M1288.500 343v-8.500q1-1.500 2 0v5v-3q1-1.200 2 0v3v-2q1-1.200 2 0v2.500v-1.200q1-1 2 0v4.500q0 4-3 5h-5q-2.500-1-4.500-5.500q.8-1.800 2.500 0z" fill="none" stroke="#000" stroke-width="1"/>
<g stroke="#000" stroke-width="1" fill="none" class="ce"><path d="M1317.500 336v9h11"/></g>
<path d="M1317.500 331.500l-2 4.500h4zM1333 345.500l-4.500-2v4z" fill="#e6e6e6" stroke="#000" stroke-width="0.9"/>
<g class="ce">
<rect x="1246" y="357" width="17" height="16" fill="#a4a4a8"/>
<rect x="1246" y="357" width="17" height="1" fill="#787878"/>
<rect x="1246" y="357" width="1" height="16" fill="#787878"/>
<rect x="1246" y="372" width="17" height="1" fill="#ffffff"/>
<rect x="1262" y="357" width="1" height="16" fill="#ffffff"/>
</g>
<path d="M1250 364.500l3.500 3.500l6-7.500" fill="none" stroke="#000" stroke-width="1.9"/>
<text transform="translate(1268.80 369.00) scale(0.840 1)" x="-0.00" y="0" font-family="'Liberation Sans', sans-serif" font-size="9.90" letter-spacing="0.420" fill="#000" stroke="#000" stroke-width="0.15">ANZIEHUNG</text>
<g class="ce">
<rect x="1247" y="386" width="28" height="29" fill="#d8d8d8"/>
<rect x="1247" y="386" width="28" height="1" fill="#ffffff"/>
<rect x="1247" y="386" width="1" height="29" fill="#ffffff"/>
<rect x="1248" y="413" width="26" height="1" fill="#a0a0a0"/>
<rect x="1273" y="387" width="1" height="27" fill="#a0a0a0"/>
<rect x="1247" y="414" width="28" height="1" fill="#707070"/>
<rect x="1274" y="386" width="1" height="29" fill="#707070"/>
<rect x="1248" y="387" width="26" height="4" fill="#8eaad4"/>
<rect x="1249" y="387.5" width="3" height="2" fill="#20e020"/>
<rect x="1270" y="387.5" width="3" height="2" fill="#f0f0f0"/>
<rect x="1254" y="388" width="1" height="2" fill="#d0dcf0"/>
<rect x="1256" y="388" width="1" height="2" fill="#d0dcf0"/>
<rect x="1258" y="388" width="1" height="2" fill="#d0dcf0"/>
<rect x="1260" y="388" width="1" height="2" fill="#d0dcf0"/>
<rect x="1262" y="388" width="1" height="2" fill="#d0dcf0"/>
<rect x="1264" y="388" width="1" height="2" fill="#d0dcf0"/>
<rect x="1266" y="388" width="1" height="2" fill="#d0dcf0"/>
<rect x="1247" y="417" width="28" height="28" fill="#d4d4d4"/>
<rect x="1247" y="417" width="28" height="1" fill="#e8e8e8"/>
<rect x="1247" y="417" width="1" height="28" fill="#e8e8e8"/>
<rect x="1247" y="444" width="28" height="1" fill="#b0b0b0"/>
<rect x="1274" y="417" width="1" height="28" fill="#b0b0b0"/>
<rect x="1251" y="436" width="3" height="3" fill="#a8a8ac"/>
<rect x="1256" y="436" width="3" height="3" fill="#a8a8ac"/>
<rect x="1261" y="436" width="3" height="3" fill="#a8a8ac"/>
<rect x="1266" y="436" width="3" height="3" fill="#a8a8ac"/>
</g>
<g fill="#f4f4f4" stroke="#202020" stroke-width="0.9"><rect x="1252.500" y="394" width="2" height="14"/><path d="M1253.500 408v4"/><path d="M1258 398.500v11h11z"/><path d="M1261 404.500v3h3z" fill="#808080"/><path d="M1260 395.500h8l1.500 1.500h-8z"/></g>
<path d="M1256 433a6.500 6.500 0 1 1 11 -3" fill="none" stroke="#a8a8ac" stroke-width="1.2"/><path d="M1253 428h6l-3 5z" fill="#a8a8ac"/>
<text transform="translate(1281.80 398.80) scale(0.880 1)" x="-0.53" y="0" font-family="'Liberation Sans', sans-serif" font-size="11.80" letter-spacing="2.033" fill="#000">Objekte</text>
<text transform="translate(1281.80 411.60) scale(0.880 1)" x="-0.50" y="0" font-family="'Liberation Sans', sans-serif" font-size="11.80" letter-spacing="1.448" fill="#000">ändern</text>
<text transform="translate(1281.80 428.60) scale(0.880 1)" x="-0.00" y="0" font-family="'Liberation Sans', sans-serif" font-size="11.80" letter-spacing="1.467" fill="#000">Änderung</text>
<text transform="translate(1281.80 441.60) scale(0.880 1)" x="-0.47" y="0" font-family="'Liberation Sans', sans-serif" font-size="11.80" letter-spacing="1.456" fill="#000">zurück</text>
<g class="ce">
<rect x="1240" y="87" width="1" height="705" fill="#a0a0a0"/>
<rect x="1241" y="86" width="1" height="707" fill="#686868"/>
</g>
<g shape-rendering="crispEdges" fill="none" stroke="#000">
<line x1="68.10" y1="333.10" x2="448.05" y2="463.19" stroke="#000" stroke-width="3.4"/>
<line x1="61.20" y1="353.25" x2="441.15" y2="483.34" stroke="#000" stroke-width="3.4"/>
<line x1="54.30" y1="373.40" x2="434.25" y2="503.49" stroke="#000" stroke-width="3.4"/>
<line x1="68.42" y1="332.15" x2="53.98" y2="374.35" stroke="#000" stroke-width="3.4"/>
<line x1="448.37" y1="462.24" x2="433.93" y2="504.43" stroke="#000" stroke-width="3.4"/>
<line x1="722.00" y1="128.00" x2="114.68" y2="349.05" stroke="#000" stroke-width="2.8"/>
<line x1="722.00" y1="136.70" x2="126.99" y2="353.26" stroke="#000" stroke-width="2.8"/>
<line x1="722.00" y1="344.50" x2="421.18" y2="453.99" stroke="#000" stroke-width="2.8"/>
<line x1="722.00" y1="354.20" x2="434.92" y2="458.69" stroke="#000" stroke-width="2.8"/>
<line x1="722.00" y1="241.10" x2="241.60" y2="415.95" stroke="#000" stroke-width="1" stroke-dasharray="16.3 6.7" stroke-dashoffset="1.4"/>
<polygon points="240.34,412.20 242.86,412.20 244.60,413.94 244.60,416.46 242.86,418.20 240.34,418.20 238.60,416.46 238.60,413.94" fill="none" stroke="#000" stroke-width="1" stroke-linejoin="miter"/>
<polygon points="95.99,342.65 132.26,342.65 114.68,349.05" fill="none" stroke="#000" stroke-width="3.4" stroke-linejoin="miter"/>
<polygon points="126.99,353.26 134.99,350.35 134.99,356.00" fill="#000" stroke="#000" stroke-width="1.2" stroke-linejoin="miter"/>
<polygon points="402.20,447.49 439.04,447.49 421.18,453.99" fill="none" stroke="#000" stroke-width="3.4" stroke-linejoin="miter"/>
<polygon points="434.92,458.69 441.42,456.32 441.42,460.92" fill="#000" stroke="#000" stroke-width="1.2" stroke-linejoin="miter"/>
<line x1="84.00" y1="290.00" x2="68.10" y2="333.10" stroke="#000" stroke-width="3.5" stroke-dasharray="17 5 9 100"/>
<line x1="84.00" y1="290.00" x2="462.50" y2="419.00" stroke="#000" stroke-width="3.5" stroke-dasharray="25.2 5.1 10.3 5.1"/>
<line x1="462.50" y1="419.00" x2="448.05" y2="463.19" stroke="#000" stroke-width="3.5" stroke-dasharray="12 5.5 16.6 100"/>
<line x1="82.00" y1="382.89" x2="82.00" y2="661.00" stroke="#000" stroke-width="2"/>
<line x1="93.00" y1="386.65" x2="93.00" y2="661.00" stroke="#000" stroke-width="2"/>
<line x1="390.00" y1="488.34" x2="390.00" y2="661.00" stroke="#000" stroke-width="2"/>
<line x1="401.00" y1="492.10" x2="401.00" y2="661.00" stroke="#000" stroke-width="2"/>
<polygon points="82.00,382.89 69.50,378.61 82.00,395.39" fill="none" stroke="#000" stroke-width="3.2" stroke-linejoin="miter"/>
<polygon points="93.00,386.65 101.00,389.39 93.00,396.65" fill="#000" stroke="#000" stroke-width="1.4" stroke-linejoin="miter"/>
<polygon points="390.00,488.34 377.50,484.06 390.00,500.84" fill="none" stroke="#000" stroke-width="3.2" stroke-linejoin="miter"/>
<polygon points="401.00,492.10 409.00,494.84 401.00,502.10" fill="#000" stroke="#000" stroke-width="1.4" stroke-linejoin="miter"/>
<line x1="82.50" y1="377.00" x2="82.50" y2="384.00" stroke="#000" stroke-width="1"/>
<line x1="401.50" y1="476.00" x2="401.50" y2="485.50" stroke="#000" stroke-width="1"/>
<line x1="89.40" y1="357.30" x2="96.90" y2="355.30" stroke="#000" stroke-width="1"/>
<line x1="421.00" y1="463.00" x2="428.80" y2="461.00" stroke="#000" stroke-width="1"/>
<line x1="241.50" y1="660.30" x2="241.50" y2="416.00" stroke="#000" stroke-width="1" stroke-dasharray="16.6 6.5" stroke-dashoffset="17.1"/>
<line x1="90.20" y1="660.50" x2="398.20" y2="660.50" stroke="#000" stroke-width="1" stroke-dasharray="8.8 14.2"/>
<line x1="151.80" y1="357.21" x2="135.22" y2="405.65" stroke="#000" stroke-width="1"/>
<line x1="167.89" y1="362.72" x2="151.30" y2="411.16" stroke="#000" stroke-width="1"/>
<line x1="145.18" y1="354.95" x2="174.51" y2="364.99" stroke="#000" stroke-width="1"/>
<polygon points="145.34,354.47 145.11,355.62 145.18,356.80 145.56,357.91 146.21,358.89 147.09,359.66 148.14,360.19 168.96,367.31 170.11,367.55 171.28,367.47 172.39,367.10 173.37,366.45 174.15,365.57 174.67,364.51 177.42,356.47 177.66,355.32 177.58,354.15 177.21,353.03 176.56,352.06 175.68,351.28 174.62,350.76 153.81,343.63 152.66,343.40 151.49,343.47 150.37,343.85 149.39,344.50 148.62,345.38 148.09,346.43" fill="none" stroke="#000" stroke-width="1" stroke-linejoin="miter"/>
<line x1="152.51" y1="357.46" x2="156.88" y2="344.68" stroke="#000" stroke-width="1"/>
<line x1="167.18" y1="362.48" x2="171.55" y2="349.70" stroke="#000" stroke-width="1"/>
<line x1="128.60" y1="403.38" x2="157.92" y2="413.43" stroke="#000" stroke-width="1"/>
<polygon points="128.43,403.86 128.96,402.81 129.73,401.92 130.71,401.27 131.82,400.90 133.00,400.83 134.15,401.06 154.96,408.18 156.01,408.71 156.90,409.48 157.55,410.46 157.92,411.58 157.99,412.75 157.76,413.90 154.94,422.13 154.42,423.18 153.64,424.06 152.67,424.71 151.55,425.09 150.38,425.16 149.23,424.93 128.41,417.80 127.36,417.28 126.48,416.50 125.83,415.53 125.46,414.41 125.38,413.24 125.62,412.09" fill="none" stroke="#000" stroke-width="1" stroke-linejoin="miter"/>
<line x1="135.93" y1="405.90" x2="131.49" y2="418.86" stroke="#000" stroke-width="1"/>
<line x1="150.59" y1="410.92" x2="146.15" y2="423.88" stroke="#000" stroke-width="1"/>
<polyline points="130.78,418.61 128.84,424.29 128.66,425.19 128.71,426.10 129.00,426.96 129.51,427.72 130.20,428.33 131.01,428.74 140.47,431.97 141.37,432.15 142.28,432.10 143.15,431.81 143.91,431.30 144.51,430.62 144.92,429.80 146.86,424.12" fill="none" stroke="#000" stroke-width="1" stroke-linejoin="miter"/>
<line x1="222.38" y1="381.38" x2="205.80" y2="429.82" stroke="#000" stroke-width="1"/>
<line x1="238.46" y1="386.88" x2="221.88" y2="435.32" stroke="#000" stroke-width="1"/>
<line x1="215.76" y1="379.11" x2="245.09" y2="389.15" stroke="#000" stroke-width="1"/>
<polygon points="215.92,378.64 215.69,379.79 215.76,380.96 216.14,382.07 216.79,383.05 217.67,383.83 218.72,384.35 239.53,391.48 240.68,391.71 241.86,391.64 242.97,391.26 243.95,390.61 244.73,389.73 245.25,388.68 248.00,380.64 248.23,379.48 248.16,378.31 247.79,377.20 247.14,376.22 246.25,375.44 245.20,374.92 224.39,367.79 223.24,367.56 222.06,367.64 220.95,368.01 219.97,368.66 219.20,369.54 218.67,370.59" fill="none" stroke="#000" stroke-width="1" stroke-linejoin="miter"/>
<line x1="223.09" y1="381.62" x2="227.46" y2="368.85" stroke="#000" stroke-width="1"/>
<line x1="237.75" y1="386.64" x2="242.13" y2="373.87" stroke="#000" stroke-width="1"/>
<line x1="199.17" y1="427.55" x2="228.50" y2="437.59" stroke="#000" stroke-width="1"/>
<polygon points="199.01,428.02 199.53,426.97 200.31,426.09 201.29,425.44 202.40,425.06 203.57,424.99 204.73,425.22 225.54,432.35 226.59,432.87 227.47,433.65 228.12,434.63 228.50,435.74 228.57,436.91 228.34,438.06 225.52,446.29 225.00,447.35 224.22,448.23 223.24,448.88 222.13,449.25 220.96,449.33 219.81,449.09 198.99,441.97 197.94,441.45 197.06,440.67 196.41,439.69 196.03,438.58 195.96,437.40 196.19,436.25" fill="none" stroke="#000" stroke-width="1" stroke-linejoin="miter"/>
<line x1="206.51" y1="430.06" x2="202.07" y2="443.02" stroke="#000" stroke-width="1"/>
<line x1="221.17" y1="435.08" x2="216.73" y2="448.04" stroke="#000" stroke-width="1"/>
<polyline points="201.36,442.78 199.41,448.45 199.23,449.35 199.29,450.26 199.58,451.13 200.09,451.89 200.77,452.49 201.59,452.90 211.05,456.14 211.95,456.32 212.86,456.26 213.73,455.97 214.49,455.46 215.09,454.78 215.50,453.96 217.44,448.28" fill="none" stroke="#000" stroke-width="1" stroke-linejoin="miter"/>
<line x1="373.47" y1="433.11" x2="356.89" y2="481.55" stroke="#000" stroke-width="1"/>
<line x1="389.55" y1="438.61" x2="372.97" y2="487.05" stroke="#000" stroke-width="1"/>
<line x1="366.85" y1="430.84" x2="396.18" y2="440.88" stroke="#000" stroke-width="1"/>
<polygon points="367.01,430.37 366.78,431.52 366.85,432.69 367.23,433.80 367.88,434.78 368.76,435.56 369.81,436.08 390.62,443.21 391.77,443.44 392.95,443.37 394.06,442.99 395.04,442.34 395.82,441.46 396.34,440.41 399.09,432.37 399.32,431.21 399.25,430.04 398.88,428.93 398.23,427.95 397.34,427.17 396.29,426.65 375.48,419.52 374.33,419.29 373.15,419.37 372.04,419.74 371.06,420.39 370.29,421.27 369.76,422.32" fill="none" stroke="#000" stroke-width="1" stroke-linejoin="miter"/>
<line x1="374.18" y1="433.35" x2="378.55" y2="420.58" stroke="#000" stroke-width="1"/>
<line x1="388.84" y1="438.37" x2="393.22" y2="425.60" stroke="#000" stroke-width="1"/>
<line x1="350.26" y1="479.28" x2="379.59" y2="489.32" stroke="#000" stroke-width="1"/>
<polygon points="350.10,479.75 350.62,478.70 351.40,477.82 352.38,477.17 353.49,476.79 354.66,476.72 355.82,476.95 376.63,484.08 377.68,484.60 378.56,485.38 379.21,486.36 379.59,487.47 379.66,488.64 379.43,489.79 376.61,498.02 376.09,499.08 375.31,499.96 374.33,500.61 373.22,500.98 372.05,501.06 370.90,500.82 350.08,493.70 349.03,493.18 348.15,492.40 347.50,491.42 347.12,490.31 347.05,489.13 347.28,487.98" fill="none" stroke="#000" stroke-width="1" stroke-linejoin="miter"/>
<line x1="357.60" y1="481.79" x2="353.16" y2="494.75" stroke="#000" stroke-width="1"/>
<line x1="372.26" y1="486.81" x2="367.82" y2="499.77" stroke="#000" stroke-width="1"/>
<polyline points="352.45,494.51 350.50,500.18 350.32,501.08 350.38,501.99 350.67,502.86 351.18,503.62 351.86,504.22 352.68,504.63 362.14,507.87 363.04,508.05 363.95,507.99 364.82,507.70 365.58,507.19 366.18,506.51 366.59,505.69 368.53,500.01" fill="none" stroke="#000" stroke-width="1" stroke-linejoin="miter"/>
<polyline points="76.00,342.50 70.60,321.00 68.00,332.50 73.00,332.50" fill="none" stroke="#000" stroke-width="1" stroke-linejoin="miter"/>
<polyline points="455.60,473.80 450.00,453.00 448.60,466.00 452.50,466.00" fill="none" stroke="#000" stroke-width="1" stroke-linejoin="miter"/>
<line x1="463.00" y1="469.00" x2="507.00" y2="484.60" stroke="#000" stroke-width="1"/>
<line x1="456.00" y1="489.00" x2="498.00" y2="504.00" stroke="#000" stroke-width="1"/>
<line x1="495.30" y1="471.50" x2="482.60" y2="507.50" stroke="#000" stroke-width="1"/>
<polygon points="491.16,476.40 493.84,476.40 495.70,478.26 495.70,480.94 493.84,482.80 491.16,482.80 489.30,480.94 489.30,478.26" fill="none" stroke="#000" stroke-width="1" stroke-linejoin="miter"/>
<polygon points="484.06,496.40 486.74,496.40 488.60,498.26 488.60,500.94 486.74,502.80 484.06,502.80 482.20,500.94 482.20,498.26" fill="none" stroke="#000" stroke-width="1" stroke-linejoin="miter"/>
<line x1="221.50" y1="604.00" x2="221.50" y2="588.00" stroke="#000" stroke-width="1"/>
<line x1="225.00" y1="607.50" x2="241.00" y2="607.50" stroke="#000" stroke-width="1"/>
<polygon points="220.16,604.30 222.84,604.30 224.70,606.16 224.70,608.84 222.84,610.70 220.16,610.70 218.30,608.84 218.30,606.16" fill="#e0e0e0" stroke="#000" stroke-width="1" stroke-linejoin="miter"/>
<polygon points="221.50,577.00 218.20,588.30 224.80,588.30" fill="#e0e0e0" stroke="#000" stroke-width="1" stroke-linejoin="miter"/>
<polygon points="252.00,607.50 240.70,604.60 240.70,610.40" fill="#e0e0e0" stroke="#000" stroke-width="1" stroke-linejoin="miter"/>
<line x1="582.00" y1="195.50" x2="621.00" y2="195.50" stroke="#000" stroke-width="1"/>
<line x1="296.55" y1="412.00" x2="337.20" y2="412.00" stroke="#000" stroke-width="2"/>
<line x1="336.50" y1="411.00" x2="336.50" y2="414.50" stroke="#000" stroke-width="1"/>
<line x1="82.50" y1="676.00" x2="82.50" y2="722.00" stroke="#000" stroke-width="1"/>
<line x1="93.50" y1="676.00" x2="93.50" y2="722.00" stroke="#000" stroke-width="1"/>
<line x1="241.50" y1="676.00" x2="241.50" y2="722.00" stroke="#000" stroke-width="1"/>
<line x1="390.50" y1="676.00" x2="390.50" y2="722.00" stroke="#000" stroke-width="1"/>
<line x1="401.50" y1="676.00" x2="401.50" y2="722.00" stroke="#000" stroke-width="1"/>
<line x1="82.50" y1="722.00" x2="82.50" y2="767.50" stroke="#000" stroke-width="1"/>
<line x1="401.50" y1="722.00" x2="401.50" y2="767.50" stroke="#000" stroke-width="1"/>
<line x1="74.00" y1="706.50" x2="101.50" y2="706.50" stroke="#000" stroke-width="1"/>
<line x1="233.80" y1="706.50" x2="410.00" y2="706.50" stroke="#000" stroke-width="1"/>
<line x1="74.00" y1="752.50" x2="410.00" y2="752.50" stroke="#000" stroke-width="1"/>
<polygon points="81.16,703.30 83.84,703.30 85.70,705.16 85.70,707.84 83.84,709.70 81.16,709.70 79.30,707.84 79.30,705.16" fill="none" stroke="#000" stroke-width="1" stroke-linejoin="miter"/>
<polygon points="92.16,703.30 94.84,703.30 96.70,705.16 96.70,707.84 94.84,709.70 92.16,709.70 90.30,707.84 90.30,705.16" fill="none" stroke="#000" stroke-width="1" stroke-linejoin="miter"/>
<polygon points="240.16,703.30 242.84,703.30 244.70,705.16 244.70,707.84 242.84,709.70 240.16,709.70 238.30,707.84 238.30,705.16" fill="none" stroke="#000" stroke-width="1" stroke-linejoin="miter"/>
<polygon points="389.16,703.30 391.84,703.30 393.70,705.16 393.70,707.84 391.84,709.70 389.16,709.70 387.30,707.84 387.30,705.16" fill="none" stroke="#000" stroke-width="1" stroke-linejoin="miter"/>
<polygon points="400.16,703.30 402.84,703.30 404.70,705.16 404.70,707.84 402.84,709.70 400.16,709.70 398.30,707.84 398.30,705.16" fill="none" stroke="#000" stroke-width="1" stroke-linejoin="miter"/>
<polygon points="81.16,749.30 83.84,749.30 85.70,751.16 85.70,753.84 83.84,755.70 81.16,755.70 79.30,753.84 79.30,751.16" fill="none" stroke="#000" stroke-width="1" stroke-linejoin="miter"/>
<polygon points="400.16,749.30 402.84,749.30 404.70,751.16 404.70,753.84 402.84,755.70 400.16,755.70 398.30,753.84 398.30,751.16" fill="none" stroke="#000" stroke-width="1" stroke-linejoin="miter"/>
<rect x="896.5" y="128.5" width="128" height="400.5" stroke-width="3"/>
<rect x="907.5" y="156.5" width="106" height="18.5" stroke-width="1"/>
<rect x="907.5" y="189" width="37" height="7.5" stroke-width="1"/>
<rect x="976.5" y="189" width="37" height="7.5" stroke-width="1"/>
<rect x="951.5" y="202.5" width="5.5" height="284" stroke-width="1"/>
<rect x="963" y="202.5" width="6.5" height="284" stroke-width="1"/>
<rect x="907.5" y="480.5" width="37" height="18.5" stroke-width="1"/>
<rect x="976.5" y="480.5" width="37" height="18.5" stroke-width="1"/>
<rect x="907.5" y="513" width="106" height="7.5" stroke-width="1"/>
<path d="M945 189H907V175H1013V189H975A12 12 0 0 0 963 201V487A12 12 0 0 0 975 499H1013V513H907V499H945A12 12 0 0 0 957 487V201A12 12 0 0 0 945 189Z" stroke-width="2" shape-rendering="crispEdges"/>
<circle cx="923.40" cy="223.50" r="16.00" fill="none" stroke="#000" stroke-width="1"/>
<circle cx="923.40" cy="223.50" r="8.60" fill="none" stroke="#000" stroke-width="1"/>
<polygon points="923.40,207.50 937.26,215.50 937.26,231.50 923.40,239.50 909.54,231.50 909.54,215.50" fill="none" stroke="#000" stroke-width="1" stroke-linejoin="miter"/>
<circle cx="997.70" cy="223.50" r="16.00" fill="none" stroke="#000" stroke-width="1"/>
<circle cx="997.70" cy="223.50" r="8.60" fill="none" stroke="#000" stroke-width="1"/>
<polygon points="997.70,207.50 1011.56,215.50 1011.56,231.50 997.70,239.50 983.84,231.50 983.84,215.50" fill="none" stroke="#000" stroke-width="1" stroke-linejoin="miter"/>
<circle cx="923.40" cy="298.50" r="16.00" fill="none" stroke="#000" stroke-width="1"/>
<circle cx="923.40" cy="298.50" r="8.60" fill="none" stroke="#000" stroke-width="1"/>
<polygon points="923.40,282.50 937.26,290.50 937.26,306.50 923.40,314.50 909.54,306.50 909.54,290.50" fill="none" stroke="#000" stroke-width="1" stroke-linejoin="miter"/>
<circle cx="997.70" cy="298.50" r="16.00" fill="none" stroke="#000" stroke-width="1"/>
<circle cx="997.70" cy="298.50" r="8.60" fill="none" stroke="#000" stroke-width="1"/>
<polygon points="997.70,282.50 1011.56,290.50 1011.56,306.50 997.70,314.50 983.84,306.50 983.84,290.50" fill="none" stroke="#000" stroke-width="1" stroke-linejoin="miter"/>
<circle cx="923.40" cy="458.50" r="16.00" fill="none" stroke="#000" stroke-width="1"/>
<circle cx="923.40" cy="458.50" r="8.60" fill="none" stroke="#000" stroke-width="1"/>
<polygon points="923.40,442.50 937.26,450.50 937.26,466.50 923.40,474.50 909.54,466.50 909.54,450.50" fill="none" stroke="#000" stroke-width="1" stroke-linejoin="miter"/>
<circle cx="997.70" cy="458.50" r="16.00" fill="none" stroke="#000" stroke-width="1"/>
<circle cx="997.70" cy="458.50" r="8.60" fill="none" stroke="#000" stroke-width="1"/>
<polygon points="997.70,442.50 1011.56,450.50 1011.56,466.50 997.70,474.50 983.84,466.50 983.84,450.50" fill="none" stroke="#000" stroke-width="1" stroke-linejoin="miter"/>
<line x1="1101.00" y1="128.50" x2="1148.00" y2="128.50" stroke="#000" stroke-width="1"/>
<line x1="1055.00" y1="175.50" x2="1148.00" y2="175.50" stroke="#000" stroke-width="1"/>
<line x1="1055.00" y1="189.50" x2="1101.50" y2="189.50" stroke="#000" stroke-width="1"/>
<line x1="1055.00" y1="223.50" x2="1101.50" y2="223.50" stroke="#000" stroke-width="1"/>
<line x1="1055.00" y1="298.50" x2="1101.50" y2="298.50" stroke="#000" stroke-width="1"/>
<line x1="1055.00" y1="458.50" x2="1101.50" y2="458.50" stroke="#000" stroke-width="1"/>
<line x1="1055.00" y1="499.50" x2="1101.50" y2="499.50" stroke="#000" stroke-width="1"/>
<line x1="1055.00" y1="513.50" x2="1148.00" y2="513.50" stroke="#000" stroke-width="1"/>
<line x1="1101.00" y1="529.50" x2="1148.00" y2="529.50" stroke="#000" stroke-width="1"/>
<line x1="1086.50" y1="167.00" x2="1086.50" y2="521.50" stroke="#000" stroke-width="1"/>
<line x1="1132.50" y1="120.00" x2="1132.50" y2="184.00" stroke="#000" stroke-width="1"/>
<line x1="1132.50" y1="504.50" x2="1132.50" y2="537.50" stroke="#000" stroke-width="1"/>
<polygon points="1085.16,172.30 1087.84,172.30 1089.70,174.16 1089.70,176.84 1087.84,178.70 1085.16,178.70 1083.30,176.84 1083.30,174.16" fill="none" stroke="#000" stroke-width="1" stroke-linejoin="miter"/>
<polygon points="1085.16,186.30 1087.84,186.30 1089.70,188.16 1089.70,190.84 1087.84,192.70 1085.16,192.70 1083.30,190.84 1083.30,188.16" fill="none" stroke="#000" stroke-width="1" stroke-linejoin="miter"/>
<polygon points="1085.16,220.30 1087.84,220.30 1089.70,222.16 1089.70,224.84 1087.84,226.70 1085.16,226.70 1083.30,224.84 1083.30,222.16" fill="none" stroke="#000" stroke-width="1" stroke-linejoin="miter"/>
<polygon points="1085.16,295.30 1087.84,295.30 1089.70,297.16 1089.70,299.84 1087.84,301.70 1085.16,301.70 1083.30,299.84 1083.30,297.16" fill="none" stroke="#000" stroke-width="1" stroke-linejoin="miter"/>
<polygon points="1085.16,455.30 1087.84,455.30 1089.70,457.16 1089.70,459.84 1087.84,461.70 1085.16,461.70 1083.30,459.84 1083.30,457.16" fill="none" stroke="#000" stroke-width="1" stroke-linejoin="miter"/>
<polygon points="1085.16,496.30 1087.84,496.30 1089.70,498.16 1089.70,500.84 1087.84,502.70 1085.16,502.70 1083.30,500.84 1083.30,498.16" fill="none" stroke="#000" stroke-width="1" stroke-linejoin="miter"/>
<polygon points="1085.16,510.30 1087.84,510.30 1089.70,512.16 1089.70,514.84 1087.84,516.70 1085.16,516.70 1083.30,514.84 1083.30,512.16" fill="none" stroke="#000" stroke-width="1" stroke-linejoin="miter"/>
<polygon points="1131.16,125.30 1133.84,125.30 1135.70,127.16 1135.70,129.84 1133.84,131.70 1131.16,131.70 1129.30,129.84 1129.30,127.16" fill="none" stroke="#000" stroke-width="1" stroke-linejoin="miter"/>
<polygon points="1131.16,172.30 1133.84,172.30 1135.70,174.16 1135.70,176.84 1133.84,178.70 1131.16,178.70 1129.30,176.84 1129.30,174.16" fill="none" stroke="#000" stroke-width="1" stroke-linejoin="miter"/>
<polygon points="1131.16,510.30 1133.84,510.30 1135.70,512.16 1135.70,514.84 1133.84,516.70 1131.16,516.70 1129.30,514.84 1129.30,512.16" fill="none" stroke="#000" stroke-width="1" stroke-linejoin="miter"/>
<polygon points="1131.16,526.30 1133.84,526.30 1135.70,528.16 1135.70,530.84 1133.84,532.70 1131.16,532.70 1129.30,530.84 1129.30,528.16" fill="none" stroke="#000" stroke-width="1" stroke-linejoin="miter"/>
<line x1="880.50" y1="676.00" x2="880.50" y2="722.00" stroke="#000" stroke-width="1"/>
<polygon points="879.16,703.30 881.84,703.30 883.70,705.16 883.70,707.84 881.84,709.70 879.16,709.70 877.30,707.84 877.30,705.16" fill="none" stroke="#000" stroke-width="1" stroke-linejoin="miter"/>
<line x1="896.50" y1="676.00" x2="896.50" y2="722.00" stroke="#000" stroke-width="1"/>
<polygon points="895.16,703.30 897.84,703.30 899.70,705.16 899.70,707.84 897.84,709.70 895.16,709.70 893.30,707.84 893.30,705.16" fill="none" stroke="#000" stroke-width="1" stroke-linejoin="miter"/>
<line x1="1024.50" y1="676.00" x2="1024.50" y2="722.00" stroke="#000" stroke-width="1"/>
<polygon points="1023.16,703.30 1025.84,703.30 1027.70,705.16 1027.70,707.84 1025.84,709.70 1023.16,709.70 1021.30,707.84 1021.30,705.16" fill="none" stroke="#000" stroke-width="1" stroke-linejoin="miter"/>
<line x1="1040.50" y1="676.00" x2="1040.50" y2="722.00" stroke="#000" stroke-width="1"/>
<polygon points="1039.16,703.30 1041.84,703.30 1043.70,705.16 1043.70,707.84 1041.84,709.70 1039.16,709.70 1037.30,707.84 1037.30,705.16" fill="none" stroke="#000" stroke-width="1" stroke-linejoin="miter"/>
<line x1="873.00" y1="706.50" x2="1049.00" y2="706.50" stroke="#000" stroke-width="1"/>
</g>
<text transform="translate(683.00 128.60) scale(0.720 1)" x="-1.46" y="0" font-family="'Liberation Sans', sans-serif" font-size="16.20" letter-spacing="0.341" fill="#000" stroke="#000" stroke-width="0.12">IPE200</text>
<text transform="translate(78.00 641.60) rotate(-90) scale(0.720 1)" x="-1.46" y="0" font-family="'Liberation Sans', sans-serif" font-size="16.20" letter-spacing="0.507" fill="#000" stroke="#000" stroke-width="0.12">IPE300</text>
<text transform="translate(582.00 211.40) scale(0.800 1)" x="-0.81" y="0" font-family="'Liberation Sans', sans-serif" font-size="16.20" letter-spacing="4.514" fill="#000" stroke="#000" stroke-width="0.12">20°</text>
<text transform="translate(318.80 426.00) scale(0.800 1)" x="-1.18" y="0" font-family="'Liberation Sans', sans-serif" font-size="15.78" letter-spacing="1.130" fill="#000" stroke="#000" stroke-width="0.12">19°</text>
<text transform="translate(60.80 701.70) scale(0.800 1)" x="-1.18" y="0" font-family="'Liberation Sans', sans-serif" font-size="15.78" letter-spacing="2.882" fill="#000" stroke="#000" stroke-width="0.12">10</text>
<text transform="translate(79.00 689.70) scale(0.800 1)" x="-0.79" y="0" font-family="'Liberation Sans', sans-serif" font-size="15.78" letter-spacing="0.000" fill="#000" stroke="#000" stroke-width="0.12">7</text>
<text transform="translate(304.80 701.70) scale(0.800 1)" x="-1.18" y="0" font-family="'Liberation Sans', sans-serif" font-size="15.78" letter-spacing="3.289" fill="#000" stroke="#000" stroke-width="0.12">139</text>
<text transform="translate(333.70 689.70) scale(0.800 1)" x="-0.59" y="0" font-family="'Liberation Sans', sans-serif" font-size="15.78" letter-spacing="0.000" fill="#000" stroke="#000" stroke-width="0.12">3</text>
<text transform="translate(410.60 701.70) scale(0.800 1)" x="-1.18" y="0" font-family="'Liberation Sans', sans-serif" font-size="15.78" letter-spacing="2.882" fill="#000" stroke="#000" stroke-width="0.12">10</text>
<text transform="translate(428.60 689.70) scale(0.800 1)" x="-0.79" y="0" font-family="'Liberation Sans', sans-serif" font-size="15.78" letter-spacing="0.000" fill="#000" stroke="#000" stroke-width="0.12">7</text>
<text transform="translate(227.80 747.60) scale(0.800 1)" x="-0.59" y="0" font-family="'Liberation Sans', sans-serif" font-size="15.78" letter-spacing="4.308" fill="#000" stroke="#000" stroke-width="0.12">300</text>
<text transform="translate(415.40 752.70) scale(0.700 1)" x="-0.71" y="0" font-family="'Liberation Sans', sans-serif" font-size="15.78" letter-spacing="2.008" fill="#000" stroke="#000" stroke-width="0.12">S235, M16, 10.9(HV)</text>
<text transform="translate(923.50 113.00) scale(0.720 1)" x="-0.82" y="0" font-family="'Liberation Sans', sans-serif" font-size="18.16" letter-spacing="0.838" fill="#000" stroke="#000" stroke-width="0.12">Schnitt A–A</text>
<text transform="translate(877.50 231.50) scale(0.800 1)" x="-1.18" y="0" font-family="'Liberation Sans', sans-serif" font-size="15.78" letter-spacing="0.000" fill="#000" stroke="#000" stroke-width="0.12">1</text>
<text transform="translate(877.00 306.80) scale(0.800 1)" x="-0.79" y="0" font-family="'Liberation Sans', sans-serif" font-size="15.78" letter-spacing="0.000" fill="#000" stroke="#000" stroke-width="0.12">2</text>
<text transform="translate(877.70 465.80) scale(0.800 1)" x="-0.59" y="0" font-family="'Liberation Sans', sans-serif" font-size="15.78" letter-spacing="0.000" fill="#000" stroke="#000" stroke-width="0.12">3</text>
<text transform="translate(858.40 701.70) scale(0.800 1)" x="-1.18" y="0" font-family="'Liberation Sans', sans-serif" font-size="15.78" letter-spacing="2.922" fill="#000" stroke="#000" stroke-width="0.12">15</text>
<text transform="translate(949.50 701.70) scale(0.800 1)" x="-1.18" y="0" font-family="'Liberation Sans', sans-serif" font-size="15.78" letter-spacing="3.542" fill="#000" stroke="#000" stroke-width="0.12">120</text>
<text transform="translate(1050.00 701.70) scale(0.800 1)" x="-1.18" y="0" font-family="'Liberation Sans', sans-serif" font-size="15.78" letter-spacing="2.297" fill="#000" stroke="#000" stroke-width="0.12">15</text>
<text transform="translate(489.7 471) rotate(-70.5) scale(0.800 1)" x="-0.79" y="0" font-family="'Liberation Sans', sans-serif" font-size="15.78" letter-spacing="4.488" fill="#000" stroke="#000" stroke-width="0.12">20</text>
<text transform="translate(1127.00 160.00) rotate(-90) scale(0.800 1)" x="-0.36" y="0" font-family="'Liberation Sans', sans-serif" font-size="15.78" letter-spacing="4.521" fill="#000" stroke="#000" stroke-width="0.12">44</text>
<text transform="translate(1115.00 139.00) rotate(-90) scale(0.800 1)" x="-0.79" y="0" font-family="'Liberation Sans', sans-serif" font-size="15.78" letter-spacing="0.000" fill="#000" stroke="#000" stroke-width="0.12">6</text>
<text transform="translate(1081.00 164.50) rotate(-90) scale(0.800 1)" x="-1.18" y="0" font-family="'Liberation Sans', sans-serif" font-size="15.78" letter-spacing="1.211" fill="#000" stroke="#000" stroke-width="0.12">13</text>
<text transform="translate(1069.50 148.50) rotate(-90) scale(0.800 1)" x="-0.63" y="0" font-family="'Liberation Sans', sans-serif" font-size="15.78" letter-spacing="0.000" fill="#000" stroke="#000" stroke-width="0.12">5</text>
<text transform="translate(1081.00 214.00) rotate(-90) scale(0.800 1)" x="-0.59" y="0" font-family="'Liberation Sans', sans-serif" font-size="15.78" letter-spacing="3.823" fill="#000" stroke="#000" stroke-width="0.12">31</text>
<text transform="translate(1069.50 195.50) rotate(-90) scale(0.800 1)" x="-0.79" y="0" font-family="'Liberation Sans', sans-serif" font-size="15.78" letter-spacing="0.000" fill="#000" stroke="#000" stroke-width="0.12">6</text>
<text transform="translate(1081.00 269.00) rotate(-90) scale(0.800 1)" x="-0.79" y="0" font-family="'Liberation Sans', sans-serif" font-size="15.78" letter-spacing="3.238" fill="#000" stroke="#000" stroke-width="0.12">70</text>
<text transform="translate(1081.00 388.00) rotate(-90) scale(0.800 1)" x="-1.18" y="0" font-family="'Liberation Sans', sans-serif" font-size="15.78" letter-spacing="3.354" fill="#000" stroke="#000" stroke-width="0.12">150</text>
<text transform="translate(1081.00 486.50) rotate(-90) scale(0.800 1)" x="-0.59" y="0" font-family="'Liberation Sans', sans-serif" font-size="15.78" letter-spacing="1.830" fill="#000" stroke="#000" stroke-width="0.12">38</text>
<text transform="translate(1069.50 467.00) rotate(-90) scale(0.800 1)" x="-0.79" y="0" font-family="'Liberation Sans', sans-serif" font-size="15.78" letter-spacing="0.000" fill="#000" stroke="#000" stroke-width="0.12">6</text>
<text transform="translate(1081.00 533.40) rotate(-90) scale(0.800 1)" x="-1.18" y="0" font-family="'Liberation Sans', sans-serif" font-size="15.78" letter-spacing="1.086" fill="#000" stroke="#000" stroke-width="0.12">13</text>
<text transform="translate(1069.50 516.00) rotate(-90) scale(0.800 1)" x="-0.63" y="0" font-family="'Liberation Sans', sans-serif" font-size="15.78" letter-spacing="0.000" fill="#000" stroke="#000" stroke-width="0.12">5</text>
<text transform="translate(1127.00 550.00) rotate(-90) scale(0.800 1)" x="-1.18" y="0" font-family="'Liberation Sans', sans-serif" font-size="15.78" letter-spacing="1.797" fill="#000" stroke="#000" stroke-width="0.12">15</text>
<text transform="translate(1116.00 534.00) rotate(-90) scale(0.800 1)" x="-0.36" y="0" font-family="'Liberation Sans', sans-serif" font-size="15.78" letter-spacing="0.000" fill="#000" stroke="#000" stroke-width="0.12">4</text>
<path d="M1198.500 636.500v16l3.800-3.600l3 6.500l2.300-1l-2.900-6.300h5.300z" fill="#fff" stroke="#10141c" stroke-width="1" stroke-linejoin="round"/>
</svg>
</body></html>
